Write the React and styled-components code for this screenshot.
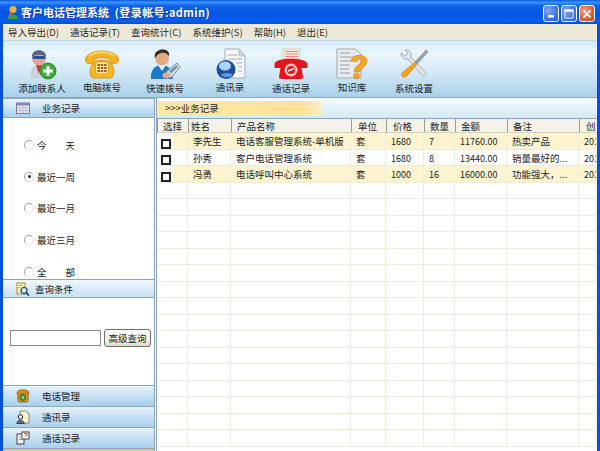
import React from 'react'
import styled, { createGlobalStyle } from 'styled-components'

const FONT = `"Noto Sans CJK SC", "Liberation Sans", sans-serif`

const Global = createGlobalStyle`
  html, body { margin: 0; padding: 0; background: #fff; }
  body { font-family: ${FONT}; font-size: 9.5px; color: #222; overflow: hidden; }
`

const Window = styled.div`
  width: 600px;
  height: 451px;
  display: flex;
  flex-direction: column;
  overflow: hidden;
  background: #0a4fd8;
`

const TitleBar = styled.div`
  height: 24px;
  flex: none;
  display: flex;
  align-items: center;
  padding: 0 5px 0 6px;
  background: linear-gradient(180deg, #0a5be0 0%, #3a93ff 10%, #0f62e8 24%, #0455e2 60%, #0660ee 88%, #0a4ccc 100%);
`

const AppIcon = styled.svg`
  width: 14px;
  height: 15px;
  flex: none;
  margin-right: 1px;
`

const TitleText = styled.div`
  color: #fff;
  font-size: 11px;
  font-weight: 700;
  line-height: 24px;
  white-space: pre;
  text-shadow: 1px 1px 0 #0a3aa8;
`

const TitleTail = styled.span`
  letter-spacing: 0.4px;
`

const WinButtons = styled.div`
  margin-left: auto;
  margin-top: 3px;
  display: flex;
  gap: 2px;
`

const WinButton = styled.div`
  width: 16px;
  height: 17px;
  box-sizing: border-box;
  border: 1px solid #fff;
  border-radius: 3px;
  display: flex;
  align-items: center;
  justify-content: center;
  background: ${p => (p.$close
    ? 'radial-gradient(circle at 30% 30%, #ee9a80, #d8562f 70%, #c44422)'
    : 'radial-gradient(circle at 30% 30%, #7fa6f2, #3d6ee0 70%, #2a55cc)')};
`

const MainArea = styled.div`
  flex: 1;
  min-height: 0;
  margin: 0 3px;
  display: flex;
  flex-direction: column;
  background: #fff;
`

const MenuBar = styled.div`
  height: 16px;
  flex: none;
  display: flex;
  align-items: center;
  padding-left: 5px;
  gap: 11px;
  background: #ece9d8;
  font-size: 9.5px;
  color: #2a2a2a;
  border-bottom: 1px solid #b9d6ea;
`

const MenuItem = styled.span`
  white-space: nowrap;
  line-height: 15px;
`

const Toolbar = styled.div`
  height: 56px;
  flex: none;
  display: flex;
  padding-left: 9px;
  background: linear-gradient(180deg, #d6ebf7 0%, #eaf6fc 22%, #cfe6f5 62%, #a9d0ea 100%);
  border-bottom: 1px solid #8fa9b8;
`

const Tool = styled.div`
  width: ${p => p.$w}px;
  flex: none;
  display: flex;
  flex-direction: column;
  align-items: center;
  padding-top: 7px;
  color: #222;
  font-size: 9.5px;
  line-height: 13px;
`

const ToolIcon = styled.svg`
  width: 34px;
  height: 32px;
  flex: none;
`

const ToolLabel = styled.span`
  margin-top: ${p => (p.$low ? 2 : 1)}px;
  white-space: nowrap;
`

const Body = styled.div`
  flex: 1;
  min-height: 0;
  display: flex;
`

const SidePanel = styled.div`
  width: 151px;
  flex: none;
  display: flex;
  flex-direction: column;
  background: #fff;
`

const Splitter = styled.div`
  width: 3px;
  flex: none;
  background: #eef3f6;
  border-left: 1px solid #8fa5b3;
  border-right: 1px solid #8fa5b3;
  box-sizing: border-box;
`

const PanelHeader = styled.div`
  height: ${p => p.$h}px;
  flex: none;
  display: flex;
  align-items: center;
  box-sizing: border-box;
  padding-left: 13px;
  gap: ${p => p.$gap}px;
  font-size: 9.5px;
  color: #222;
  background: linear-gradient(180deg, ${p => (p.$strong ? '#e8f3fb, #a9d0ee' : '#f2f8fc, #c6e0f2')});
  border-top: 1px solid #8fa5b3;
  border-bottom: 1px solid #8fa5b3;
`

const HeaderIcon = styled.svg`
  width: 14px;
  height: 14px;
  flex: none;
`

const RadioList = styled.div`
  height: 161px;
  flex: none;
  padding: 11px 0 0 21px;
  box-sizing: border-box;
  display: flex;
  flex-direction: column;
`

const RadioRow = styled.div`
  height: 31.75px;
  flex: none;
  display: flex;
  align-items: center;
  gap: 3px;
  font-size: 9.5px;
  white-space: pre;
`

const Radio = styled.span`
  position: relative;
  width: 8px;
  height: 8px;
  flex: none;
  border-radius: 50%;
  border: 1px solid #a9a9a9;
  border-right-color: #e4e4e4;
  border-bottom-color: #e4e4e4;
  background: #fff;
  &::after {
    content: '';
    display: ${p => (p.$on ? 'block' : 'none')};
    position: absolute;
    left: 2.5px;
    top: 2.5px;
    width: 3px;
    height: 3px;
    border-radius: 50%;
    background: #222;
  }
`

const SearchArea = styled.div`
  height: 87px;
  flex: none;
  display: flex;
  align-items: center;
  padding: 0 0 7px 7px;
  gap: 3px;
  box-sizing: border-box;
`

const SearchInput = styled.div`
  width: 91px;
  height: 16px;
  box-sizing: border-box;
  border: 1px solid #8c8c8c;
  background: #fff;
`

const SearchButton = styled.div`
  width: 47px;
  height: 18px;
  box-sizing: border-box;
  border: 1px solid #6e6e6e;
  border-radius: 3px;
  display: flex;
  align-items: center;
  justify-content: center;
  font-size: 9.5px;
  background: linear-gradient(180deg, #fff, #f1efe6 70%, #dcd8c8);
`

const NavSection = styled(PanelHeader)`
  height: 21px;
  gap: 12px;
  background: linear-gradient(180deg, #e8f3fb 0%, #cfe5f6 35%, #a8d0ef 100%);
  border-bottom: 0;
`

const PanelFoot = styled.div`
  flex: 1;
  background: #c9c7a8;
  border-top: 1px solid #8fa5b3;
`

const Content = styled.div`
  flex: 1;
  min-width: 0;
  display: flex;
  flex-direction: column;
`

const Breadcrumb = styled.div`
  height: 21px;
  flex: none;
  box-sizing: border-box;
  padding-top: 3px;
  background: linear-gradient(180deg, #f5fbfe, #d5eaf7);
  border-bottom: 1px solid #8fa5b3;
`

const Crumb = styled.div`
  width: 165px;
  height: 15px;
  padding-left: 8px;
  box-sizing: border-box;
  font-size: 9.5px;
  line-height: 15px;
  color: #222;
  background: linear-gradient(90deg, #ffe9a8 0%, #ffe298 88%, #fff0c8 100%);
`

const GridHead = styled.div`
  height: 14px;
  flex: none;
  display: flex;
  box-sizing: border-box;
  background: #f4f3ea;
  border-bottom: 1px solid #d5d2c4;
`

const HeadCell = styled.div`
  width: ${p => p.$w}px;
  flex: none;
  box-sizing: border-box;
  padding-left: ${p => p.$pad}px;
  font-size: 9.5px;
  line-height: 14px;
  white-space: nowrap;
  overflow: hidden;
  border-left: 1px solid #9a9a90;
  color: #222;
`

const GridBody = styled.div`
  flex: 1;
  min-height: 0;
  overflow: hidden;
`

const Row = styled.div`
  height: 16.5px;
  display: flex;
  box-sizing: border-box;
  background: ${p => (p.$tint ? '#fff4cf' : '#fff')};
  border-bottom: 1px solid #efeedd;
`

const Cell = styled.div`
  width: ${p => p.$w}px;
  flex: none;
  box-sizing: border-box;
  padding-left: 5px;
  font-size: ${p => (p.$num ? 9 : 9.5)}px;
  line-height: 17px;
  white-space: nowrap;
  overflow: hidden;
  border-right: 1px solid #efeedd;
  color: #222;
`

const CheckCell = styled.div`
  width: 31px;
  flex: none;
  box-sizing: border-box;
  display: flex;
  align-items: center;
  padding: 6px 0 0 4px;
  background: linear-gradient(90deg, #fff 16px, transparent 16px);
  border-right: 1px solid #efeedd;
`

const Check = styled.span`
  width: 6px;
  height: 6px;
  border: 2px solid #222;
  background: #fff;
`

const COLS = [31, 43, 120, 35, 38, 31, 52, 72, 18]

const HEADS = [
  ['选择', 5], ['姓名', 2], ['产品名称', 5], ['单位', 6], ['价格', 6],
  ['数量', 5], ['金额', 5], ['备注', 5], ['创', 6],
]

const ROWS = [
  ['李先生', '电话客服管理系统-单机版', '套', '1680', '7', '11760.00', '热卖产品', '201'],
  ['孙秀', '客户电话管理系统', '套', '1680', '8', '13440.00', '销量最好的...', '201'],
  ['冯勇', '电话呼叫中心系统', '套', '1000', '16', '16000.00', '功能强大，...', '201'],
]

const NUM_CELLS = [3, 4, 5, 7]

const MENUS = ['导入导出(D)', '通话记录(T)', '查询统计(C)', '系统维护(S)', '帮助(H)', '退出(E)']

function AddContactIcon() {
  return (
    <ToolIcon viewBox="0 0 34 32">
      <path d="M6 30 C4 22 8 17 14 17 C19 17 22 19 23 24 L19 30Z" fill="#ccd2dc" />
      <path d="M11 17 L14 26 L17 17Z" fill="#d8322c" />
      <ellipse cx="14" cy="10" rx="7" ry="7.5" fill="#e2a68c" />
      <path d="M7 9 C6 0 22 0 21 9 C18 6 10 6 7 9Z" fill="#5a6688" />
      <rect x="7.5" y="8" width="13" height="3" rx="1.5" fill="#2f4c9c" />
      <circle cx="23" cy="23" r="8" fill="#3cab3c" stroke="#1f7a1f" strokeWidth="0.8" />
      <rect x="18" y="21.5" width="10" height="3" fill="#fff" />
      <rect x="21.5" y="18" width="3" height="10" fill="#fff" />
    </ToolIcon>
  )
}

function DeskPhoneIcon() {
  return (
    <ToolIcon viewBox="0 0 34 32">
      <path d="M8 15 C10 11 24 11 26 15 C30 21 30 28 26 30 L8 30 C4 28 4 21 8 15Z" fill="#f5b81f" stroke="#c9820e" strokeWidth="0.7" />
      <path d="M0.5 12 C0.5 0 33.5 0 33.5 12 C33.5 17 24.5 17 24.5 11.5 C22 9 12 9 9.5 11.5 C9.5 17 0.5 17 0.5 12Z" fill="#f7b21c" stroke="#c9820e" strokeWidth="0.7" />
      <path d="M4 8 C9 3 25 3 30 8" fill="none" stroke="#ffe07a" strokeWidth="1.4" />
      <rect x="10.5" y="14" width="13" height="12" rx="3" fill="#fbe6a0" stroke="#c9820e" strokeWidth="0.6" />
      <g fill="#9c5a14">
        <rect x="12.5" y="16" width="2.4" height="2" /><rect x="15.8" y="16" width="2.4" height="2" /><rect x="19.1" y="16" width="2.4" height="2" />
        <rect x="12.5" y="19" width="2.4" height="2" /><rect x="15.8" y="19" width="2.4" height="2" /><rect x="19.1" y="19" width="2.4" height="2" />
        <rect x="12.5" y="22" width="2.4" height="2" /><rect x="15.8" y="22" width="2.4" height="2" /><rect x="19.1" y="22" width="2.4" height="2" />
      </g>
    </ToolIcon>
  )
}

function QuickDialIcon() {
  return (
    <ToolIcon viewBox="0 0 34 32">
      <path d="M3 31 C2 21 8 17 14 17 C20 17 24 21 25 31Z" fill="#1f78c8" />
      <path d="M10 17 L14 23 L18 17Z" fill="#eaf2fa" />
      <ellipse cx="14" cy="9.5" rx="7" ry="8" fill="#e6ab82" />
      <path d="M7 10 C4 0 23 -2 21 8 C19 5 16 4 13 5 C10 6 9 7 7 10Z" fill="#2e2a28" />
      <path d="M18 24 L29 15 L32 19 L23 30Z" fill="#dfe5ea" stroke="#6a7684" strokeWidth="0.8" />
      <path d="M21 23 L28.5 17 L30 19 L23 25.5Z" fill="#6f93b8" />
      <ellipse cx="18.5" cy="27.5" rx="4" ry="3" fill="#e6ab82" />
    </ToolIcon>
  )
}

function ContactsIcon() {
  return (
    <ToolIcon viewBox="0 0 34 32">
      <path d="M12 1 L26 1 L32 8 L32 30 L12 30Z" fill="#f4f6f8" stroke="#a4aeb8" />
      <path d="M26 1 L26 8 L32 8Z" fill="#d0d6dc" stroke="#a4aeb8" strokeWidth="0.6" />
      <g stroke="#a8b0b8" strokeWidth="1">
        <line x1="15" y1="7" x2="24" y2="7" /><line x1="15" y1="11" x2="29" y2="11" />
        <line x1="23" y1="15" x2="29" y2="15" /><line x1="25" y1="19" x2="29" y2="19" />
        <line x1="25" y1="23" x2="29" y2="23" />
      </g>
      <circle cx="13" cy="21.5" r="9.5" fill="#1f4e9c" />
      <ellipse cx="12" cy="18" rx="6" ry="4.5" fill="#a8d4f6" />
      <ellipse cx="14" cy="27" rx="5.5" ry="2" fill="#5a9ae0" />
    </ToolIcon>
  )
}

function RedPhoneIcon() {
  return (
    <ToolIcon viewBox="0 0 34 32">
      <rect x="9" y="1" width="17" height="10" fill="#f8ece0" stroke="#c8b8a8" strokeWidth="0.6" />
      <g stroke="#e88a78" strokeWidth="1">
        <line x1="11" y1="3.5" x2="24" y2="3.5" /><line x1="11" y1="6" x2="24" y2="6" /><line x1="11" y1="8.5" x2="24" y2="8.5" />
      </g>
      <path d="M0.5 16 C1 9 33 9 33.5 16 L33.5 20 L27 20 L26 14 L8 14 L7 20 L0.5 20Z" fill="#e01820" />
      <path d="M7.5 14 L26.5 14 L29 29 C29 31 27 31 26 31 L8 31 C7 31 5 31 5 29Z" fill="#e8141d" />
      <circle cx="17" cy="22" r="6.5" fill="#f6c4c0" />
      <circle cx="17" cy="22" r="4" fill="#d81820" />
      <path d="M14 23 L20 20.5" stroke="#fff" strokeWidth="1.4" />
    </ToolIcon>
  )
}

function KnowledgeIcon() {
  return (
    <ToolIcon viewBox="0 0 34 32">
      <path d="M2 1 L20 1 L26 6 L26 30 L2 30Z" fill="#e9ebee" stroke="#a0a8b0" />
      <g stroke="#9ea6ae" strokeWidth="1.1">
        <line x1="5" y1="5" x2="15" y2="5" /><line x1="5" y1="9" x2="18" y2="9" />
        <line x1="5" y1="13" x2="16" y2="13" /><line x1="5" y1="17" x2="15" y2="17" />
        <line x1="5" y1="21" x2="14" y2="21" /><line x1="5" y1="25" x2="15" y2="25" />
      </g>
      <path d="M16 13 C16 6 32 5 32 13 C32 19 26 19 25 24 L19 24 C19 17 26 17 26 13 C26 10 22 11 22 14Z" fill="#f4a428" stroke="#d0861a" strokeWidth="0.5" />
      <circle cx="21.5" cy="28" r="3" fill="#f4a428" stroke="#d0861a" strokeWidth="0.5" />
    </ToolIcon>
  )
}

function SettingsIcon() {
  return (
    <ToolIcon viewBox="0 0 34 32">
      <path d="M4 5 C4 10 8 12 11 11 L25 27 C27 29 30 27 29 25 L14 9 C15 4 12 1 8 2 L11 5 L8 8Z" fill="#e0e4e8" stroke="#98a0a8" strokeWidth="0.8" />
      <path d="M29 2 L31 4 L20 16 L18 14Z" fill="#9aa2aa" stroke="#6e767e" strokeWidth="0.5" />
      <path d="M18 14 L20 16 L10 28 C7 31 3 28 5 25Z" fill="#f2a224" stroke="#c8801a" strokeWidth="0.6" />
    </ToolIcon>
  )
}

function CalendarIcon() {
  return (
    <HeaderIcon viewBox="0 0 14 14">
      <rect x="0.5" y="2" width="13" height="10.5" fill="#f2f2fa" stroke="#7878a8" />
      <rect x="0.5" y="2" width="13" height="2.5" fill="#8484b8" />
      <g stroke="#a4a4cc" strokeWidth="0.7">
        <line x1="4" y1="4.5" x2="4" y2="12" /><line x1="7" y1="4.5" x2="7" y2="12" /><line x1="10" y1="4.5" x2="10" y2="12" />
        <line x1="1" y1="7" x2="13" y2="7" /><line x1="1" y1="9.5" x2="13" y2="9.5" />
      </g>
    </HeaderIcon>
  )
}

function QueryIcon() {
  return (
    <HeaderIcon viewBox="0 0 14 14">
      <rect x="1" y="1" width="8" height="11" fill="#fbf3c8" stroke="#a89030" />
      <g stroke="#a89030" strokeWidth="0.7">
        <line x1="2.5" y1="3.5" x2="7" y2="3.5" /><line x1="2.5" y1="5.5" x2="5" y2="5.5" />
      </g>
      <circle cx="8" cy="8.5" r="3" fill="#d8eefa" stroke="#1e3a6a" strokeWidth="1.2" />
      <line x1="10" y1="10.5" x2="13" y2="13.5" stroke="#1e3a6a" strokeWidth="1.6" />
    </HeaderIcon>
  )
}

function PhoneSmallIcon() {
  return (
    <HeaderIcon viewBox="0 0 14 14">
      <rect x="2" y="3" width="10" height="10" rx="1.5" fill="#e8a420" stroke="#8a5a10" />
      <path d="M1 3 C3 0 11 0 13 3 L13 5 L1 5Z" fill="#d88a18" stroke="#8a5a10" strokeWidth="0.6" />
      <circle cx="7" cy="8.5" r="3" fill="#4fa04a" stroke="#2f6a2c" />
      <circle cx="7" cy="8.5" r="1" fill="#e8f0c8" />
    </HeaderIcon>
  )
}

function AddressSmallIcon() {
  return (
    <HeaderIcon viewBox="0 0 14 14">
      <path d="M4 1 L10 1 L13 4 L13 13 L4 13Z" fill="#fbf3d0" stroke="#8a8a70" />
      <circle cx="4.5" cy="7" r="2.2" fill="#fff" stroke="#222" />
      <path d="M0.8 13.5 C0.8 9.5 8.2 9.5 8.2 13.5Z" fill="#5a78a8" stroke="#222" strokeWidth="0.8" />
    </HeaderIcon>
  )
}

function CallLogSmallIcon() {
  return (
    <HeaderIcon viewBox="0 0 14 14">
      <rect x="1" y="3" width="7" height="10" fill="#f4f4ec" stroke="#444" />
      <rect x="6" y="1" width="7" height="7" fill="#fbfbf4" stroke="#444" />
      <path d="M8 3 C10 1.5 12 3 10.5 4.5 L9.5 5.5" fill="none" stroke="#c83020" strokeWidth="1" />
      <path d="M3 6 L6 6 M3 8.5 L6 8.5" stroke="#888" strokeWidth="0.8" />
    </HeaderIcon>
  )
}

export default function App() {
  return (
    <Window>
      <Global />
      <TitleBar>
        <AppIcon viewBox="0 0 14 15">
          <circle cx="7" cy="4.5" r="3.5" fill="#f2b23a" />
          <path d="M2 14 C2 8 12 8 12 14Z" fill="#3f9a58" />
          <path d="M4 6 L3 12 L6 10Z" fill="#e8602c" />
        </AppIcon>
        <TitleText>客户电话管理系统<TitleTail>{'  (登录帐号:admin)'}</TitleTail></TitleText>
        <WinButtons>
          <WinButton>
            <svg width="9" height="9" viewBox="0 0 9 9"><rect x="1" y="6" width="6" height="2.5" fill="#fff" /></svg>
          </WinButton>
          <WinButton>
            <svg width="10" height="10" viewBox="0 0 11 11"><rect x="1" y="1" width="9" height="9" fill="none" stroke="#fff" /><rect x="1" y="1" width="9" height="2" fill="#fff" /></svg>
          </WinButton>
          <WinButton $close>
            <svg width="10" height="10" viewBox="0 0 11 11"><path d="M1.5 1.5 L9.5 9.5 M9.5 1.5 L1.5 9.5" stroke="#fff" strokeWidth="2" /></svg>
          </WinButton>
        </WinButtons>
      </TitleBar>
      <MainArea>
        <MenuBar>
          {MENUS.map(m => <MenuItem key={m}>{m}</MenuItem>)}
        </MenuBar>
        <Toolbar>
          <Tool $w={60}><AddContactIcon /><ToolLabel $low>添加联系人</ToolLabel></Tool>
          <Tool $w={60}><DeskPhoneIcon /><ToolLabel>电脑拨号</ToolLabel></Tool>
          <Tool $w={66}><QuickDialIcon /><ToolLabel $low>快速拨号</ToolLabel></Tool>
          <Tool $w={64}><ContactsIcon /><ToolLabel>通讯录</ToolLabel></Tool>
          <Tool $w={58}><RedPhoneIcon /><ToolLabel $low>通话记录</ToolLabel></Tool>
          <Tool $w={64}><KnowledgeIcon /><ToolLabel>知识库</ToolLabel></Tool>
          <Tool $w={60}><SettingsIcon /><ToolLabel $low>系统设置</ToolLabel></Tool>
        </Toolbar>
        <Body>
          <SidePanel>
            <PanelHeader $h={20} $gap={12} $strong><CalendarIcon />业务记录</PanelHeader>
            <RadioList>
              <RadioRow><Radio />{'今　　天'}</RadioRow>
              <RadioRow><Radio $on />最近一周</RadioRow>
              <RadioRow><Radio />最近一月</RadioRow>
              <RadioRow><Radio />最近三月</RadioRow>
              <RadioRow><Radio />{'全　　部'}</RadioRow>
            </RadioList>
            <PanelHeader $h={19} $gap={5}><QueryIcon />查询条件</PanelHeader>
            <SearchArea>
              <SearchInput />
              <SearchButton>高级查询</SearchButton>
            </SearchArea>
            <NavSection><PhoneSmallIcon />电话管理</NavSection>
            <NavSection><AddressSmallIcon />通讯录</NavSection>
            <NavSection><CallLogSmallIcon />通话记录</NavSection>
            <PanelFoot />
          </SidePanel>
          <Splitter />
          <Content>
            <Breadcrumb><Crumb>{'>>>业务记录'}</Crumb></Breadcrumb>
            <GridHead>
              {HEADS.map(([h, pad], i) => <HeadCell key={h} $w={COLS[i]} $pad={pad}>{h}</HeadCell>)}
            </GridHead>
            <GridBody>
              {ROWS.map((r, i) => (
                <Row key={r[0]} $tint={i !== 1}>
                  <CheckCell><Check /></CheckCell>
                  {r.map((c, j) => <Cell key={j} $w={COLS[j + 1]} $num={NUM_CELLS.includes(j)}>{c}</Cell>)}
                </Row>
              ))}
              {Array.from({ length: 16 }).map((_, i) => (
                <Row key={i}>
                  {COLS.map((w, j) => <Cell key={j} $w={w} />)}
                </Row>
              ))}
            </GridBody>
          </Content>
        </Body>
      </MainArea>
    </Window>
  )
}
